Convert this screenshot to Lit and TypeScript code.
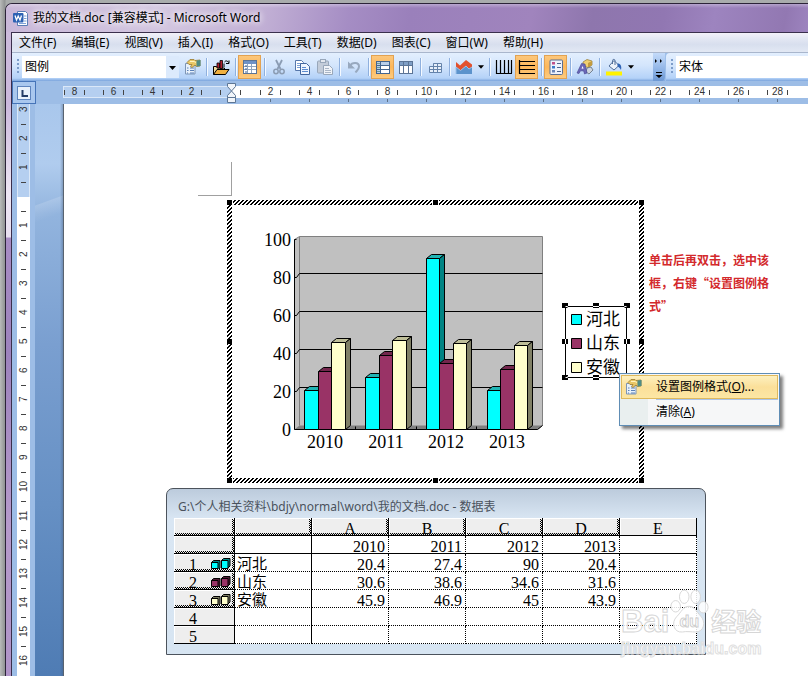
import { LitElement, html, svg, css, nothing } from "lit";
import { customElement } from "lit/decorators.js";

const MENUS: [string, string][] = [
  ["文件", "F"], ["编辑", "E"], ["视图", "V"], ["插入", "I"], ["格式", "O"],
  ["工具", "T"], ["数据", "D"], ["图表", "C"], ["窗口", "W"], ["帮助", "H"],
];

const SERIES = [
  { name: "河北", values: ["20.4", "27.4", "90", "20.4"], face: "#00ffff", top: "#20b4b4", side: "#008484" },
  { name: "山东", values: ["30.6", "38.6", "34.6", "31.6"], face: "#993366", top: "#73264d", side: "#4d1a33" },
  { name: "安徽", values: ["45.9", "46.9", "45", "43.9"], face: "#ffffcc", top: "#bfbf99", side: "#808066" },
];
const YEARS = ["2010", "2011", "2012", "2013"];

const propsIcon = svg`
  <path d="M2.500 5.500h9.500v10.500h-9.500z" fill="#e8f1fb" stroke="#7d95b5"/>
  <path d="M4 10h1.500M7 10h4M4 12.500h1.500M7 12.500h4M4 15h1M7 15h4" stroke="#5a80b8"/>
  <path d="M4 4.500 7 1.500h4l1 1 5-.5v6l-3.500.500L12 7 9 9.500 7.500 8.500 9 6.500H6z" fill="#e9c766" stroke="#9a7a2c" stroke-width=".8"/>
  <path d="M13.500 2.500 17.500 2v6l-4 .500z" fill="#4f8c86"/>
  <path d="M7 3.500h4l2 1" stroke="#fff4c0" fill="none"/>`;

const ICONS: Record<string, unknown> = {
  props: propsIcon,
  open: svg`
    <path d="M1.500 16.500V8.500h3l1 1.500h7v2" fill="#f3dca0" stroke="#000"/>
    <path d="M1.500 16.500 5 11.500h12l-3.500 5z" fill="#f0b040" stroke="#000"/>
    <path d="M5 5h2.500v5H5zM8 2.500h2.500v8H8z" fill="#b02030" stroke="#000" stroke-width=".8"/>
    <path d="M12 5.500V9M12.500 4c1-1.500 3-1.500 4 .500M17 2.500v3h-3" fill="none" stroke="#000"/>`,
  sheet: svg`
    <rect x="2.500" y="2.500" width="13" height="13" fill="#fff" stroke="#5b7496"/>
    <path d="M3 3h12v3H3z" fill="#6f92c6"/>
    <path d="M3 8.500h12M3 11.500h12M6.500 6v9M10.500 6v9" stroke="#8fa4be"/>
    <path d="M4 8h2M4 11h2M4 14h2" stroke="#3d5f92"/>`,
  cut: svg`
    <path d="M6 2l4.500 9M12 2 7.500 11" stroke="#8b9cb3" stroke-width="1.800" fill="none"/>
    <circle cx="6" cy="13.500" r="2.200" fill="none" stroke="#8b9cb3" stroke-width="1.500"/>
    <circle cx="12" cy="13.500" r="2.200" fill="none" stroke="#8b9cb3" stroke-width="1.500"/>`,
  copy: svg`
    <path d="M2.500 2.500h6l2 2v8h-8z" fill="#fff" stroke="#5677ab"/>
    <path d="M4 5.500h4M4 7.500h4M4 9.500h3" stroke="#7ba0d6"/>
    <path d="M7.500 5.500h6l3 3v8h-9z" fill="#eef5ff" stroke="#41669f"/>
    <path d="M9 9.500h4M9 11.500h6M9 13.500h6" stroke="#5d8cd0"/>`,
  paste: svg`
    <rect x="1.500" y="3" width="11" height="12" rx="1" fill="#c3ccd9" stroke="#98a7ba"/>
    <rect x="4.500" y="1.500" width="5" height="3" fill="#e3e8ef" stroke="#98a7ba"/>
    <path d="M7.500 7.500h6l3 3v6h-9z" fill="#f0f3f8" stroke="#98a7ba"/>
    <path d="M9 10.500h4M9 12.500h6M9 14.500h6" stroke="#aab6c6"/>`,
  undo: svg`
    <path d="M5 8c2-4 9-4 9 .500 0 3-2 4-3.500 6" fill="none" stroke="#98a9bf" stroke-width="2"/>
    <path d="M3 3.500v7h7z" fill="#98a9bf"/>`,
  byRow: svg`
    <rect x="2.500" y="3.500" width="13" height="12" fill="#fff" stroke="#44658f"/>
    <path d="M3 4h3v11H3zM6 4h9v3H6z" fill="#b9cfea"/>
    <path d="M3 7.500h12M3 11.500h12M6.500 4v11" stroke="#44658f"/>
    <path d="M3 5.500h3M3 9.500h3M3 13.500h3" stroke="#6f9a94"/>`,
  byCol: svg`
    <rect x="2.500" y="3.500" width="13" height="12" fill="#fff" stroke="#5b7496"/>
    <path d="M3 4h12v3H3z" fill="#7f9fc6"/>
    <path d="M3 7.500h12M6.500 4v11M11.500 4v11" stroke="#5b7496"/>`,
  table: svg`
    <path d="M3.500 8.500v6h12v-9h-8v3z" fill="#e6effa" stroke="#6483ab"/>
    <path d="M3.500 11.500h12M7.500 5.500v9M11.500 5.500v9M7 8.500h8.500" stroke="#6483ab"/>`,
  area: svg`
    <path d="M1 16V4l4 3.500L11 2l6 4.500V16z" fill="#e2512e"/>
    <path d="M1 16V9l4.500 3.500L11 8l3 3 3-2v7z" fill="#5c93cc"/>
    <path d="M1 16V9l4.500 3.500L11 8l3 3 3-2" fill="none" stroke="#9cc2ea"/>`,
  vgrid: svg`<path d="M1.500 2v13.500h15.500M5.500 2v13M9.500 2v13M13.500 2v13M16.500 2v13" fill="none" stroke="#000" stroke-width="1.200"/>`,
  hgrid: svg`<path d="M1.500 2v14M1.500 15.500H17M1.500 11.500H17M1.500 7.500H17M1.500 3.500H17" fill="none" stroke="#000" stroke-width="1.200"/>`,
  legend: svg`
    <rect x="3" y="2" width="12.500" height="14.500" rx="1" fill="#eef2fb" stroke="#5b6f93"/>
    <path d="M5 4h3v2.500H5z" fill="#c0508a"/><path d="M5 8h3v2.500H5z" fill="#3b79c8"/><path d="M5 12h3v2.500H5z" fill="#6a86b8"/>
    <path d="M10 5.500h4M10 9.500h4M10 13.500h4" stroke="#4f658e"/>`,
  angle: svg`
    <path d="M7 4 11 1.500l5 1.500v4l-4 2.500L7 8z" fill="#f0cf70" stroke="#9a8340" stroke-width=".8"/>
    <path d="M12 5v4.500L16 7V3z" fill="#c39b3e"/>
    <path d="M11 10l4-1 2 3-4 4-3-2z" fill="#cfd6de" stroke="#5e6b7a" stroke-width=".8"/>
    <path d="M1 15 5.500 5.500 9 6l2 9-2.500 1-.800-3-3.200-.200L3 15.500z" fill="#6a67b8" stroke="#45438e" stroke-width=".6"/>
    <path d="M5.500 10.500 6.700 8l.800 2.700z" fill="#fff"/>`,
  fill: svg`
    <path d="M4 8 9 2.500 14 7.500 9 12z" fill="#eef3fa" stroke="#54709a"/>
    <path d="M7.500 6V2.500c0-1.500 2.500-1.500 2.500 0V7" fill="none" stroke="#54709a"/>
    <path d="M12.500 5.500c3 0 4.500 2.500 3.500 6.500-1-2-2-3-3.500-3.500z" fill="#2f63b5"/>
    <path d="M1 13.500h16v4H1z" fill="#fff200"/>`,
};

type Tool = { icon: string; label: string; on?: boolean; drop?: boolean };
const TOOLS: (Tool | null)[] = [
  { icon: "props", label: "设置格式" }, null,
  { icon: "open", label: "导入文件" }, null,
  { icon: "sheet", label: "查看数据表", on: true }, null,
  { icon: "cut", label: "剪切" }, { icon: "copy", label: "复制" }, { icon: "paste", label: "粘贴" }, null,
  { icon: "undo", label: "撤消" }, null,
  { icon: "byRow", label: "按行", on: true }, { icon: "byCol", label: "按列" }, null,
  { icon: "table", label: "数据表" }, null,
  { icon: "area", label: "图表类型", drop: true }, null,
  { icon: "vgrid", label: "分类轴网格线" }, { icon: "hgrid", label: "数值轴网格线", on: true }, null,
  { icon: "legend", label: "图例", on: true }, null,
  { icon: "angle", label: "绘图" }, null,
  { icon: "fill", label: "填充颜色", drop: true },
];

@customElement("tool-strip")
class ToolStrip extends LitElement {
  static styles = css`
    :host { display: flex; height: 28px; background: #9dbfea; font: 12px/16px "Noto Sans", "Noto Sans CJK SC", sans-serif; }
    .bar { display: flex; align-items: center; padding-left: 4px; background: linear-gradient(#e3effe, #d3e5fc 45%, #b4d2f8 90%, #7ba4dc); }
    .second { flex: 1; margin-left: 1px; border-radius: 4px 0 0 0; }
    .grip { width: 2px; height: 16px; margin: 0 3px 0 1px; background: repeating-linear-gradient(#7c9cca 0 2px, transparent 2px 4px); }
    .combo { position: relative; height: 22px; margin-right: 1px; }
    .combo select { appearance: none; box-sizing: border-box; width: 157px; height: 22px; padding: 0 16px 0 3px; border: 0; border-radius: 0;
      background: linear-gradient(90deg, #fff 144px, #dceafc 144px); color: #000; font: inherit; }
    .second .combo { flex: 1; margin: 0; }
    .second select { width: 100%; min-width: 60px; background: #fff; }
    .caret { width: 7px; height: 4px; fill: #000; }
    .combo .caret { position: absolute; right: 3px; top: 10px; pointer-events: none; }
    button { display: grid; place-items: center; box-sizing: border-box; width: 23px; height: 24px; padding: 0; border: 0; background: none; }
    .on { border: 1px solid #e2a252; background: linear-gradient(#fcc77c, #fdb75a 50%, #fdcb80); }
    .icon { width: 18px; height: 18px; }
    .drop { width: 11px; }
    .drop .caret { width: 6px; }
    .sep { width: 1px; height: 18px; margin: 0 2px 0 3px; background: #8fb0de; box-shadow: 1px 0 #f4f9ff; }
    .more { width: 12px; height: 28px; margin-left: 17px; border-radius: 0 0 4px 0; background: linear-gradient(#c4dbfa, #8fb4e6 60%, #6d98d4); }
    .more svg { width: 10px; height: 24px; }
  `;
  render() {
    const caret = html`<svg class="caret" viewBox="0 0 7 4"><path d="M0 0h7L3.500 4z"/></svg>`;
    return html`
      <div class="bar">
        <span class="grip"></span>
        <span class="combo"><select aria-label="图表对象"><option>图例</option></select>${caret}</span>
        ${TOOLS.map((t) => t === null ? html`<span class="sep"></span>` : html`
          <button class=${t.on ? "on" : "off"} aria-label=${t.label}><svg class="icon" viewBox="0 0 18 18">${ICONS[t.icon]}</svg></button>
          ${t.drop ? html`<button class="drop" aria-label=${t.label + "选项"}>${caret}</button>` : nothing}`)}
        <button class="more" aria-label="更多按钮"><svg viewBox="0 0 10 24">
          <path d="M1 4v4l2-2zM6 4v4l2-2zM2 17h6v1H2zM1.500 20h7L5 23z"/></svg></button>
      </div>
      <div class="bar second">
        <span class="grip"></span>
        <span class="combo"><select aria-label="字体"><option>宋体</option></select></span>
      </div>`;
  }
}

@customElement("chart-object")
class ChartObject extends LitElement {
  static styles = css`
    :host { display: block; width: 418px; flex: none; }
    svg { display: block; width: 418px; height: 284px; }
    text { font: 18px "Liberation Serif", "Noto Sans CJK SC", serif; fill: #000; }
    .end { text-anchor: end; }
    .mid { text-anchor: middle; }
    .key { font: 17px "Noto Sans CJK SC", sans-serif; }
    .line { fill: none; stroke: #000; }
  `;
  // Front-face outlines: left edges of the three bars plus the right edge, then the three tops.
  private groups = [
    { x: [304, 318, 331, 345], y: [390, 371, 342] },
    { x: [365, 379, 392, 406], y: [377, 355, 340] },
    { x: [426, 439, 453, 466], y: [258, 363, 343] },
    { x: [487, 500, 514, 527], y: [390, 369, 345] },
  ];
  private bar(l: number, r: number, t: number, s: (typeof SERIES)[number]) {
    return svg`
      <path d="M${l} ${t}l5-4H${r + 5}l-5 4z" fill=${s.top} stroke="#000"/>
      <path d="M${r} ${t}l5-4V425l-5 4z" fill=${s.side} stroke="#000"/>
      <path d="M${l} ${t}H${r}V429H${l}z" fill=${s.face} stroke="#000"/>`;
  }
  render() {
    const handles = [[227, 200], [433, 200], [639, 200], [227, 339], [639, 339], [227, 478], [433, 478], [639, 478]];
    const grips = [[562, 303], [593, 303], [624, 303], [562, 339], [624, 339], [562, 375], [593, 375], [624, 375]];
    return html`<svg viewBox="227 200 418 284" role="img" aria-label="柱形图">
      <defs><pattern id="hatch" width="4" height="4" patternUnits="userSpaceOnUse">
        <path shape-rendering="crispEdges" d="M2 0h2v1H2zM1 1h2v1H1zM0 2h2v1H0zM0 3h1v1H0zM3 3h1v1H3z"/>
      </pattern></defs>
      <path d="M227 200h417v283H227zM232 205v273h407V205z" fill="url(#hatch)" fill-rule="evenodd"/>
      ${handles.map(([x, y]) => svg`<path d="M${x - 1} ${y}h7v5h-7z" fill="#fff"/><path d="M${x} ${y}h5v5h-5z"/>`)}
      <g transform="translate(.5 .5)">
        <path d="M294 239l5-3H542V425l-5 4H294z" fill="#c0c0c0" stroke="#808080"/>
        <path d="M299 236V425" class="line" style="stroke:#808080"/>
        <path d="M294 429l5-4H542l-5 4z" fill="#808080"/>
        ${[273, 311, 349, 387].map((y) => svg`<path class="line" d="M294 ${y + 4}h2l3-4H542"/>`)}
        <path class="line" d="M296 239h-2V429H537l5-4"/>
        ${[355, 416, 476].map((x) => svg`<path class="line" d="M${x} 426v3"/>`)}
        ${this.groups.map((g) => SERIES.map((s, i) => this.bar(g.x[i], g.x[i + 1], g.y[i], s)))}
        <path class="line" d="M565 306h61v71h-61z"/>
      </g>
      ${[100, 80, 60, 40, 20, 0].map((v, i) => svg`<text class="end" x="291" y=${246 + i * 38}>${v}</text>`)}
      ${YEARS.map((v, i) => svg`<text class="mid" x=${325 + Math.round(i * 60.5)} y="448">${v}</text>`)}
      ${SERIES.map((s, i) => svg`
        <path d="M571.500 ${314.5 + i * 24}h10v10h-10z" fill=${s.face} stroke="#000"/>
        <text class="key" x="586" y=${325 + i * 24}>${s.name}</text>`)}
      ${grips.map(([x, y]) => svg`<path d="M${x} ${y}h6v5h-6z"/>`)}
      <path d="M567.500 307.500v-1h-2M624.500 307.500v-1h2M567.500 376.500v1h-2M624.500 376.500v1h2M593 306.500h6M593 377.500h6M565.500 339v5M626.500 339v5" fill="none" stroke="#fff"/>
    </svg>`;
  }
}

@customElement("data-sheet")
class DataSheet extends LitElement {
  static styles = css`
    :host { display: block; box-sizing: border-box; width: 540px; padding: 0 8px 10px 7px; border: 1px solid #4c535c; border-radius: 7px 7px 0 0;
      background: linear-gradient(#bccbdc, #d9e6f3 30px, #d7e5f2); }
    .title { box-sizing: border-box; height: 29px; padding: 5px 0 0 4px; font: 12px/25px "Noto Sans", "Noto Sans CJK SC", sans-serif; color: #4a525c; white-space: nowrap; }
    table { border-collapse: separate; border-spacing: 0; table-layout: fixed; width: 523px; background: #fff; font: 16px/13px "Liberation Serif", "Noto Sans CJK SC", serif; color: #000; }
    .c0 { width: 61px; }
    .c1 { width: 77px; }
    th, td { box-sizing: border-box; height: 18px; padding: 4px 0 0; overflow: hidden; font-weight: normal;
      border-right: 1px dotted #000; border-bottom: 1px dotted #000; }
    td { padding-right: 3px; text-align: right; }
    td.name { padding: 4px 0 0 2px; text-align: left; font-size: 15px; border-right: 1px solid #000; }
    th { background: #eee; border-right: 1px solid #000; border-bottom: 1px solid #000; box-shadow: inset 1px 1px #fff; }
    .used { background: repeating-conic-gradient(#000 0 25%, #eee 0 50%) left bottom / 2px 2px repeat-x,
      repeating-conic-gradient(#000 0 25%, #eee 0 50%) right top / 2px 2px repeat-y, #eee; }
    .years td { border-bottom: 1px solid #000; }
    .head { display: flex; align-items: center; height: 13px; padding: 0 3px 0 15px; justify-content: space-between; }
    .head svg { width: 20px; height: 12px; margin-bottom: 4px; }
  `;
  render() {
    const blank = [0, 1, 2, 3, 4];
    return html`
      <div class="title">G:\\个人相关资料\\bdjy\\normal\\word\\我的文档.doc - 数据表</div>
      <table>
        <colgroup><col class="c0">${[0, ...blank].map(() => html`<col class="c1">`)}</colgroup>
        <tr><th class="used"></th><th class="used"></th>${["A", "B", "C", "D"].map((c) => html`<th class="used">${c}</th>`)}<th>E</th></tr>
        <tr class="years"><th class="used"></th><td class="name"></td>${YEARS.map((y) => html`<td>${y}</td>`)}<td></td></tr>
        ${SERIES.map((s, i) => html`<tr>
          <th class="used"><div class="head">${i + 1}<svg viewBox="0 0 20 12">${[0, 10].map((x) => svg`
            <path d="M${x + 0.5} ${x ? 3.5 : 5.5}l2-2h6.500v7.500l-2 2z" fill=${s.side} stroke="#000"/>
            <path d="M${x + 0.5} ${x ? 3.5 : 5.5}h6.500v${x ? 8 : 6}h-6.500z" fill=${s.face} stroke="#000"/>`)}</svg></div></th>
          <td class="name">${s.name}</td>${s.values.map((v) => html`<td>${v}</td>`)}<td></td></tr>`)}
        ${[4, 5].map((n) => html`<tr><th><div class="head">${n}</div></th><td class="name"></td>${blank.map(() => html`<td></td>`)}</tr>`)}
      </table>`;
  }
}

@customElement("app-root")
class AppRoot extends LitElement {
  static styles = css`
    :host { display: flex; flex-direction: column; box-sizing: border-box; min-height: 100vh; padding: 3px 0 0 5px; overflow: hidden;
      background: linear-gradient(90deg, #b9bbba, #8f9292 5px, #a9acac 6px); font: 12px/16px "Noto Sans", "Noto Sans CJK SC", sans-serif; color: #000; }
    .window { flex: 1; display: flex; flex-direction: column; padding-left: 5px; border: solid #2b2338; border-width: 1px 0 0 1px; border-radius: 7px 0 0 0;
      background: linear-gradient(#cdbcdc, #cbb8dc 100px, #eee6f4 190px, #e8dff0 233px, #a88cc4 234px, #9d83bd 350px, #b69acb 520px, #b094c8); }
    .title { display: flex; align-items: center; height: 28px; margin-left: -5px; padding-left: 6px; border-radius: 6px 0 0 0; white-space: nowrap;
      background: linear-gradient(rgba(255,255,255,.3), transparent 4px), linear-gradient(100deg, #c9b8d9, #d3c6e0 160px, #c0aed4 260px, #a58dc4 340px, #9a80bb 400px, #a084bd 520px, #8e76ad 580px, #9177b2 650px, #9d84bf 700px, #9278b2 770px, #9d84bf); }
    .title svg { width: 17px; height: 17px; margin-right: 4px; }
    .title h1 { margin: 0; font: 12px/18px "Noto Sans", "Noto Sans CJK SC", sans-serif; text-shadow: 0 0 6px #fff, 0 0 8px #fff; }
    .client { flex: 1; display: flex; flex-direction: column; border: solid #3a2f4c; border-width: 1px 0 0 1px; background: #9dbde6; }
    .menu { display: flex; height: 19px; border-bottom: 1px solid #a9b6cc; background: linear-gradient(#f3f1f9, #e3e7f3 30%, #d8dfee 60%, #e2e8f4); }
    .menu button { padding: 0 8px 0 7px; border: 0; background: none; font: inherit; color: inherit; white-space: nowrap; }

    .ruler { display: flex; height: 23px; }
    .corner { display: grid; place-items: center; box-sizing: border-box; width: 24px; height: 23px; margin-right: 27px; padding: 0; border: 1px solid #4674b8; background: #a9c7ee; }
    .corner svg { width: 14px; height: 14px; }
    .scale { display: flex; position: relative; height: 12px; margin-top: 5px; color: #333; font: 10px/12px "Liberation Sans", sans-serif; }
    .cell { flex: none; width: 39px; text-align: center; background: linear-gradient(#444, #444) 9px 4px / 1px 5px no-repeat, linear-gradient(#444, #444) 29px 4px / 1px 5px no-repeat; }
    .neg { justify-content: flex-end; width: 168px; overflow: hidden; background: #b5cff0; box-shadow: inset 1px 1px #dbe8f8, inset 0 -1px #dbe8f8; }
    .half { flex: none; width: 20px; background: linear-gradient(#444, #444) 9px 4px / 1px 5px no-repeat; }
    .pos { flex: 1; min-width: 0; background: #fff; }
    .run { display: flex; overflow: hidden; }
    .tabs { position: absolute; left: 39px; right: 0; top: 13px; height: 3px; background: repeating-linear-gradient(90deg, #5f7288 0 1px, transparent 1px 39px); }
    .indent { position: absolute; left: -5px; top: -3px; width: 11px; height: 21px; }

    .doc { flex: 1; display: flex; min-height: 0; background: #fff; }
    .vruler { flex: none; width: 13px; padding: 0 5px; background: #9dbde6; color: #333; font: 10px/13px "Liberation Sans", sans-serif; display: flex; flex-direction: column; }
    .vneg { display: flex; flex-direction: column; justify-content: flex-end; height: 93px; overflow: hidden; background: #b5cff0; box-shadow: inset 1px 0 #dbe8f8, inset -1px 0 #dbe8f8; }
    .vpos { flex: 1; background: #fff; }
    .vcell { flex: none; display: flex; align-items: center; justify-content: center; width: 13px; height: 29px; writing-mode: vertical-rl; transform: rotate(180deg);
      background: linear-gradient(#444, #444) 4px 28px / 5px 1px no-repeat; }
    .vhalf { flex: none; height: 15px; background: linear-gradient(#444, #444) 4px 0 / 5px 1px no-repeat; }
    .vgap { height: 14px; }
    .backdrop { flex: none; width: 28px; background: linear-gradient(90deg, transparent 25px, rgba(60,80,110,.35)),
      linear-gradient(160deg, transparent 95px, rgba(255,255,255,.15) 96px, transparent 112px),
      linear-gradient(#a9c7ec, #b0ccee 60px, #92b4de 110px, #7a9fd0 240px, #6690c4 400px, #4f7cb4 570px); }
    .page { flex: 1; min-width: 0; position: relative; box-sizing: border-box; padding-top: 58px; border-left: 1px solid #59636f; background: #fff; }
    .crop { width: 33px; height: 33px; margin-left: 134px; border: solid #a0a0a0; border-width: 0 1px 1px 0; }
    .row { display: flex; align-items: flex-start; margin: 4px 0 0 163px; }
    .note { flex: none; margin: 48px 0 0 4px; color: #d3292c; font: bold 12px/23px "Noto Sans CJK SC", sans-serif; }
    .stack { position: relative; }
    data-sheet { margin: 4px 0 0 102px; }

    .popup { position: absolute; left: 392px; top: 173px; box-sizing: border-box; width: 161px; padding: 1px; border: 1px solid #5f8db5; box-shadow: 3px 3px 3px rgba(0,0,0,.5);
      background: linear-gradient(90deg, #e9efef 28px, #f6f7f8 28px); }
    .popup button { display: flex; align-items: center; box-sizing: border-box; width: 100%; height: 24px; padding: 0 0 0 2px; border: 1px solid transparent; background: none; font: inherit; color: inherit; text-align: left; }
    .popup button.hot { border-color: #dfb95c; background: linear-gradient(#fdf0bf, #fbe09a 50%, #fce6a4); }
    .popup svg, .popup .pad { flex: none; width: 18px; height: 18px; margin-right: 14px; }
    .popup hr { height: 1px; margin: 0 0 0 35px; border: 0; background: #a9c3ea; }

    .mark { position: absolute; left: 557px; top: 483px; color: rgba(255,255,255,.85); white-space: nowrap; pointer-events: none;
      font: bold 31px/36px "Liberation Sans", "Noto Sans CJK SC", sans-serif; -webkit-text-stroke: 1px #d6d6d6; }
    .brand { display: flex; align-items: center; margin-top: 17px; height: 36px; }
    .paw { width: 40px; height: 46px; margin-top: -20px; }
    .paw text { font: bold 17px "Liberation Sans", sans-serif; }
    .cn { margin-left: 2px; font-size: 25px; }
    .url { font-size: 16px; line-height: 18px; -webkit-text-stroke: 1px #e0e0e0; }
  `;
  render() {
    const neg = [8, 6, 4, 2];
    const pos = Array.from({ length: 14 }, (_, i) => (i + 1) * 2);
    const lines = Array.from({ length: 16 }, (_, i) => i + 1);
    return html`
      <div class="window">
        <header class="title">
          <svg viewBox="0 0 17 17">
            <path d="M5.500 1.500h8l2 2v12h-10z" fill="#fff" stroke="#5a7db5"/>
            <path d="M12 6h2.500M12 8.500h2.500M12 11h2.500M7 13.500h7" stroke="#7fa3d8"/>
            <rect x="1" y="3" width="10.500" height="9.500" rx="1" fill="#2d62b3"/>
            <path d="M3 5.500 4.500 10 6.200 6 8 10 9.500 5.500" fill="none" stroke="#fff" stroke-width="1.300"/>
          </svg>
          <h1>我的文档.doc [兼容模式] - Microsoft Word</h1>
        </header>
        <div class="client">
          <nav class="menu">${MENUS.map(([n, k]) => html`<button>${n}(${k})</button>`)}</nav>
          <tool-strip></tool-strip>
          <div class="ruler">
            <button class="corner" aria-label="制表符"><svg viewBox="0 0 14 14"><rect x=".5" y=".5" width="13" height="13" fill="#e9f1fb" stroke="#5e84bd"/><path d="M5.500 4v6H11" fill="none" stroke="#243c66" stroke-width="2"/></svg></button>
            <div class="scale neg">${neg.map((n) => html`<span class="cell">${n}</span>`)}<span class="half"></span></div>
            <div class="scale pos">
              <div class="run"><span class="half"></span>${pos.map((n) => html`<span class="cell">${n}</span>`)}</div>
              <div class="tabs"></div>
              <svg class="indent" viewBox="0 0 11 21">
                <path d="M1.500.500h8v3l-4 4.500-4-4.500zM1.500 14.500v-2l4-4.500 4 4.500v2zM1.500 14.500h8v5h-8z" fill="#f1f5fa" stroke="#5d7695"/>
              </svg>
            </div>
          </div>
          <div class="doc">
            <div class="vruler">
              <div class="vneg">${[3, 2, 1].map((n) => html`<div class="vcell">${n}</div>`)}<div class="vhalf"></div></div>
              <div class="vpos"><div class="vgap"></div>${lines.map((n) => html`<div class="vcell">${n}</div>`)}</div>
            </div>
            <div class="backdrop"></div>
            <main class="page">
              <div class="crop"></div>
              <div class="row stack">
                <chart-object></chart-object>
                <p class="note">单击后再双击，选中该<br>框，右键“设置图例格<br>式”</p>
                <div class="popup">
                  <button class="hot"><svg viewBox="0 0 18 18">${propsIcon}</svg><span>设置图例格式(<u>O</u>)...</span></button>
                  <hr>
                  <button><span class="pad"></span><span>清除(<u>A</u>)</span></button>
                </div>
              </div>
              <data-sheet></data-sheet>
              <div class="mark">
                <div class="brand">Bai<svg class="paw" viewBox="0 0 42 48">
                  <g fill="#fff" fill-opacity=".85" stroke="#d6d6d6">
                    <ellipse cx="7" cy="18" rx="5" ry="6"/><ellipse cx="16" cy="8" rx="5" ry="7"/><ellipse cx="28" cy="8" rx="5" ry="7"/><ellipse cx="36" cy="19" rx="5" ry="6"/>
                    <path d="M21 18c6 0 8 6 12 10 6 6 4 17-5 17-4 0-10-1-14 0-9 1-12-10-6-16 5-5 7-11 13-11z"/>
                  </g><text x="11" y="40" fill="#fff" stroke="#cfcfcf">du</text></svg><span class="cn">经验</span></div>
                <div class="url">jingyan.baidu.com</div>
              </div>
            </main>
          </div>
        </div>
      </div>`;
  }
}
